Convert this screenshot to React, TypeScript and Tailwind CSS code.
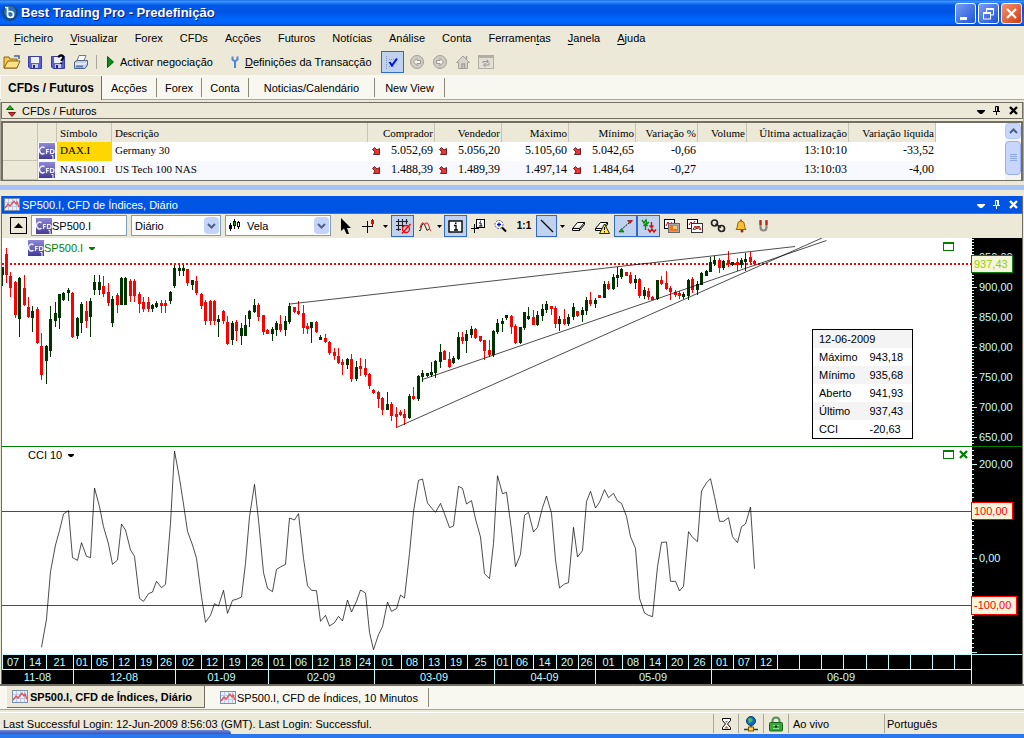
import React from 'react'
import clsx from 'clsx'

// x, high, body top, body bottom, low, rising
type Candle = [number, number, number, number, number, 0 | 1]

const candles: Candle[] = [
  [2, 267, 267, 275, 286, 1], [6, 248, 254, 275, 283, 0], [10, 272, 276, 288, 297, 0], [15, 281, 282, 315, 318, 0],
  [19, 277, 278, 319, 337, 1], [24, 275, 288, 305, 306, 0], [28, 297, 307, 317, 318, 0], [32, 306, 311, 318, 332, 1],
  [37, 307, 309, 343, 344, 0], [41, 333, 346, 375, 380, 0], [46, 345, 346, 361, 384, 1], [50, 306, 319, 351, 357, 1],
  [55, 302, 313, 321, 327, 1], [59, 294, 294, 318, 329, 1], [63, 292, 293, 300, 301, 1], [68, 288, 290, 293, 301, 1],
  [72, 292, 293, 337, 338, 0], [77, 317, 318, 336, 339, 1], [81, 302, 304, 323, 333, 1], [86, 301, 311, 321, 328, 0],
  [90, 298, 301, 317, 337, 1], [94, 275, 282, 290, 295, 1], [99, 275, 282, 290, 295, 1], [103, 276, 286, 294, 297, 0],
  [108, 283, 292, 303, 306, 0], [112, 296, 299, 323, 327, 1], [117, 293, 295, 305, 313, 0], [121, 277, 278, 305, 305, 1],
  [125, 277, 278, 305, 305, 1], [130, 279, 281, 296, 302, 0], [134, 279, 281, 296, 302, 0], [139, 292, 294, 304, 313, 0],
  [143, 297, 302, 309, 312, 0], [148, 297, 302, 309, 312, 0], [152, 304, 305, 309, 312, 1], [156, 301, 303, 307, 308, 1],
  [161, 300, 303, 306, 313, 0], [165, 300, 303, 306, 313, 0], [170, 291, 292, 301, 304, 1], [174, 265, 268, 286, 288, 1],
  [179, 265, 268, 271, 276, 1], [183, 265, 268, 271, 276, 1], [187, 269, 269, 283, 286, 0], [192, 280, 280, 285, 290, 1],
  [196, 276, 281, 293, 295, 0], [201, 293, 294, 306, 309, 0], [205, 300, 302, 321, 325, 0], [210, 300, 301, 321, 325, 0],
  [214, 300, 301, 321, 325, 0], [218, 315, 319, 322, 337, 1], [223, 310, 311, 321, 324, 0], [227, 316, 322, 344, 345, 0],
  [232, 321, 323, 340, 345, 1], [236, 320, 322, 331, 341, 0], [241, 323, 328, 336, 345, 1], [245, 315, 325, 336, 336, 1],
  [249, 310, 311, 319, 327, 1], [254, 299, 305, 312, 313, 1], [258, 303, 305, 317, 321, 0], [263, 315, 315, 332, 335, 0],
  [267, 329, 330, 334, 334, 0], [272, 327, 329, 334, 341, 1], [276, 321, 323, 330, 336, 1], [280, 315, 324, 330, 332, 0],
  [285, 316, 321, 330, 336, 1], [289, 303, 306, 322, 324, 1], [294, 307, 307, 312, 313, 0], [298, 301, 311, 314, 315, 0],
  [303, 305, 313, 328, 334, 0], [307, 323, 326, 329, 334, 0], [311, 322, 322, 328, 343, 1], [316, 321, 322, 332, 333, 0],
  [320, 335, 337, 340, 340, 1], [325, 334, 338, 342, 343, 0], [329, 341, 342, 353, 355, 0], [334, 348, 352, 356, 360, 0],
  [338, 348, 356, 363, 364, 0], [342, 359, 362, 365, 375, 0], [347, 358, 359, 365, 369, 1], [351, 354, 359, 379, 382, 0],
  [356, 361, 367, 379, 381, 1], [360, 358, 366, 369, 376, 0], [365, 359, 368, 375, 377, 0], [369, 373, 374, 386, 389, 0],
  [373, 389, 390, 393, 394, 0], [378, 391, 392, 399, 408, 0], [382, 397, 398, 410, 415, 0], [387, 392, 404, 410, 410, 1],
  [391, 402, 404, 416, 421, 0], [396, 407, 414, 417, 428, 0], [400, 410, 412, 415, 416, 0], [404, 409, 414, 418, 425, 0],
  [409, 394, 396, 418, 419, 1], [413, 387, 396, 399, 400, 0], [418, 375, 376, 399, 401, 1], [422, 370, 373, 377, 382, 1],
  [427, 373, 373, 376, 377, 1], [431, 362, 372, 375, 377, 1], [435, 360, 361, 373, 378, 1], [440, 344, 352, 362, 368, 1],
  [444, 350, 351, 360, 360, 0], [449, 352, 359, 367, 368, 0], [453, 356, 358, 363, 364, 1], [458, 332, 337, 359, 360, 1],
  [462, 332, 337, 341, 344, 0], [466, 330, 334, 341, 353, 1], [471, 326, 329, 335, 338, 1], [475, 328, 329, 338, 339, 0],
  [480, 336, 336, 341, 342, 0], [484, 340, 340, 351, 360, 0], [489, 340, 350, 355, 357, 0], [493, 330, 331, 355, 357, 1],
  [497, 319, 323, 332, 334, 1], [502, 318, 321, 324, 332, 1], [506, 315, 315, 318, 320, 1], [511, 315, 316, 327, 334, 0],
  [515, 324, 326, 343, 344, 0], [520, 327, 327, 343, 344, 1], [524, 312, 312, 328, 330, 1], [528, 307, 316, 319, 320, 1],
  [533, 310, 317, 325, 325, 0], [537, 311, 315, 325, 326, 1], [542, 304, 309, 316, 321, 1], [546, 301, 304, 310, 313, 1],
  [551, 306, 306, 309, 315, 0], [555, 306, 308, 324, 328, 0], [559, 316, 319, 324, 331, 1], [564, 309, 319, 324, 325, 0],
  [568, 314, 317, 324, 326, 1], [573, 303, 307, 317, 320, 1], [577, 311, 311, 316, 317, 0], [582, 307, 310, 315, 322, 1],
  [586, 297, 300, 311, 315, 1], [590, 292, 300, 304, 306, 0], [595, 298, 300, 304, 308, 1], [599, 295, 295, 298, 298, 0],
  [604, 281, 284, 298, 298, 1], [608, 281, 284, 289, 290, 0], [613, 274, 277, 289, 290, 1], [617, 267, 275, 278, 287, 1],
  [621, 268, 269, 277, 279, 1], [626, 272, 272, 276, 276, 0], [630, 272, 275, 283, 284, 0], [635, 275, 279, 283, 289, 1],
  [639, 278, 279, 296, 298, 0], [644, 287, 290, 296, 299, 1], [648, 288, 291, 297, 300, 0], [652, 296, 297, 300, 300, 0],
  [657, 280, 280, 299, 300, 1], [661, 276, 280, 284, 285, 0], [666, 271, 283, 289, 290, 0], [670, 286, 288, 292, 300, 0],
  [675, 290, 292, 295, 297, 0], [679, 291, 293, 296, 299, 0], [683, 292, 294, 297, 299, 1], [688, 279, 280, 296, 300, 1],
  [692, 277, 279, 290, 293, 0], [697, 281, 284, 290, 295, 1], [701, 272, 273, 285, 285, 1], [706, 270, 271, 276, 276, 1],
  [710, 257, 262, 272, 272, 1], [714, 256, 260, 264, 266, 1], [719, 258, 260, 268, 273, 0], [723, 260, 261, 268, 270, 1],
  [728, 251, 260, 264, 267, 0], [732, 262, 262, 265, 266, 1], [737, 258, 262, 265, 271, 0], [741, 258, 260, 265, 268, 1],
  [745, 253, 259, 262, 271, 1], [750, 252, 257, 262, 263, 0], [754, 260, 261, 264, 265, 0],
]

// CCI series, thirds of a unit below the top of the lower pane, one per candle from the tenth on
const cci = [
  622, 537, 395, 315, 272, 222, 212, 353, 361, 308, 349, 353, 144, 200, 260, 312, 373, 360, 252, 270, 330, 349, 475, 484,
  461, 456, 424, 443, 433, 250, 33, 115, 192, 274, 315, 355, 470, 547, 526, 491, 498, 451, 520, 481, 478, 471, 370, 230,
  133, 240, 398, 445, 455, 388, 381, 373, 234, 240, 221, 355, 437, 451, 452, 544, 526, 558, 548, 529, 543, 480, 516, 484,
  450, 459, 577, 629, 584, 560, 486, 514, 506, 465, 474, 340, 215, 121, 117, 189, 204, 217, 190, 221, 263, 258, 139, 145,
  192, 182, 237, 291, 401, 416, 310, 107, 161, 157, 270, 380, 343, 226, 217, 276, 262, 203, 168, 220, 360, 444, 432, 428,
  262, 351, 332, 185, 154, 204, 187, 149, 173, 160, 183, 190, 229, 290, 325, 475, 519, 526, 530, 380, 307, 306, 424, 424,
  453, 439, 275, 292, 305, 153, 128, 116, 170, 244, 244, 233, 290, 308, 260, 252, 201, 386,
]

const weekEdges = [
  2, 24, 46, 73, 91, 113, 135, 157, 175, 201, 223, 246, 268, 290, 312, 334, 356, 374, 401, 423, 445, 467, 494, 511, 533,
  556, 578, 595, 622, 644, 666, 688, 711, 733, 755, 777, 799, 821, 843, 866, 888, 910, 932, 954, 971,
]
const weekLabels = [
  '07', '14', '21', '01', '05', '12', '19', '26', '02', '12', '19', '26', '01', '06', '12', '18', '24', '01', '08', '13',
  '19', '25', '01', '06', '14', '20', '26', '01', '08', '14', '20', '26', '01', '07', '12',
]

const monthEdges = [2, 73, 175, 268, 374, 494, 595, 711, 971]
const monthLabels = ['11-08', '12-08', '01-09', '02-09', '03-09', '04-09', '05-09', '06-09']

const priceTicks: [string, number][] = [
  ['950,00', 257], ['900,00', 287], ['850,00', 317], ['800,00', 347], ['750,00', 377], ['700,00', 407], ['650,00', 437],
]

const menus = [
  ['', 'F', 'icheiro'], ['', 'V', 'isualizar'], ['Forex', '', ''], ['CFDs', '', ''], ['Acções', '', ''], ['Futuros', '', ''],
  ['Notícias', '', ''], ['Análise', '', ''], ['Conta', '', ''], ['Ferramen', 't', 'as'], ['', 'J', 'anela'], ['', 'A', 'juda'],
]

const quotes = [
  { symbol: 'DAX.I', name: 'Germany 30', bid: '5.052,69', ask: '5.056,20', high: '5.105,60', low: '5.042,65', pct: '-0,66', time: '13:10:10', net: '-33,52' },
  { symbol: 'NAS100.I', name: 'US Tech 100 NAS', bid: '1.488,39', ask: '1.489,39', high: '1.497,14', low: '1.484,64', pct: '-0,27', time: '13:10:03', net: '-4,00' },
]

const ohlc = [
  ['Máximo', '943,18'], ['Mínimo', '935,68'], ['Aberto', '941,93'], ['Último', '937,43'], ['CCI', '-20,63'],
]

type IconProps = { w?: number; h?: number; children: React.ReactNode }
const Icon = ({ w = 16, h = 16, children }: IconProps) => (
  <svg width={w} height={h} viewBox={`0 0 ${w} ${h}`} className="block shrink-0" aria-hidden="true">{children}</svg>
)

const CfdIcon = () => (
  <Icon>
    <defs>
      <linearGradient id="cfd" x1="0" y1="0" x2="0" y2="1">
        <stop offset="0" stopColor="#8f87d8" /><stop offset="1" stopColor="#453a94" />
      </linearGradient>
    </defs>
    <rect width="16" height="16" fill="url(#cfd)" />
    <path d="M5.500 4.800A3.100 3.300 0 1 0 5.500 10.200" fill="none" stroke="#f0eefc" strokeWidth="1.500" />
    <path d="M7.500 11V6.500H10M7.500 8.700H9.600" fill="none" stroke="#f0eefc" strokeWidth="1.200" />
    <path d="M11.500 6.500V10.500H13Q15 10.500 15 8.500T13 6.500Z" fill="none" stroke="#f0eefc" strokeWidth="1.200" />
    <path d="M12.500 12.500H14V16" fill="none" stroke="#fff" />
  </Icon>
)

const ChartIcon = () => (
  <Icon w={16} h={13}>
    <rect x=".5" y=".5" width="15" height="12" fill="#e9f0fb" stroke="#7d8fae" />
    <path d="M4.500 1V12M8.500 1V12M12.500 1V12M1 4.500H15M1 8.500H15" stroke="#b9c8e4" />
    <path d="M1 10L4 6L6 8L10 3L12 6L13 4L15 9" fill="none" stroke="#e05050" strokeWidth="1.300" />
  </Icon>
)

const DownIcon = () => (
  <Icon w={8} h={8}>
    <path d="M.5 2.500L2.500 .5L5 3L7.500 1.500V7.500H1.500L3 5Z" fill="#e83838" stroke="#500" strokeWidth=".8" />
  </Icon>
)

const Caret = ({ className = 'fill-black' }: { className?: string }) => (
  <svg width="6" height="3" viewBox="0 0 6 3" className={clsx('block shrink-0', className)} aria-hidden="true"><path d="M0 0H6V1L4 3H2L0 1Z" /></svg>
)

const PaneTools = ({ light }: { light?: boolean }) => {
  const color = light ? '#fff' : '#000'
  return (
    <div className="flex items-center gap-2 pr-1">
      <button aria-label="Opções"><Icon w={8} h={9}><path d="M0 4H8V5L5 8H3L0 5Z" fill={color} /></Icon></button>
      <button aria-label="Fixar"><Icon w={8} h={9}><path d="M2.500 5V.5H5.500V5M4.500 1V5M0 5.500H7M3.500 6V9" fill="none" stroke={color} /></Icon></button>
      <button aria-label="Fechar"><Icon w={9} h={9}><path d="M1 1L8 8M8 1L1 8" stroke={color} strokeWidth="2.400" /></Icon></button>
    </div>
  )
}

const Save = ({ query }: { query?: boolean }) => (
  <Icon>
    <path d="M1.500 2.500H14.500V14.500H3L1.500 13Z" fill="#5a5fd8" stroke="#3a3ca0" />
    <rect x="4" y="3" width="8" height="6" fill="#eef2fb" />
    <rect x="5" y="10" width="6" height="4" fill="#c9cede" /><rect x="6" y="11" width="2" height="3" fill="#26278a" />
    {query && <path d="M8.500 3.500Q9 1 11.500 1.200T13 4.500Q11.500 5.500 11.300 7M11.300 8.500V10" fill="none" stroke="#000" strokeWidth="2" />}
  </Icon>
)

type ToolProps = { label: string; on?: boolean; className?: string; children: React.ReactNode }
const Tool = ({ label, on, className = 'w-[23px]', children }: ToolProps) => (
  <button
    aria-label={label}
    className={clsx('flex h-[22px] shrink-0 items-center justify-center', on && 'border border-[#316ac5] bg-[#c1d2ee]', className)}
  >
    {children}
  </button>
)

const TitleBar = () => (
  <header className="flex h-[26px] items-center bg-[linear-gradient(#1c6ce8,#3a95ff_6%,#0058e6_20%,#0054e3_45%,#0066ff_75%,#0064fa_90%,#0040c8)] px-0.5">
    <Icon w={16} h={18}>
      <circle cx="8" cy="9" r="8" fill="#164a86" /><circle cx="8" cy="8" r="6" fill="#2d6fb0" />
      <path d="M3 3.500H5.500V10.500Q5.500 13.500 8.500 13.500T11.500 10.500T8.500 7.500H6" fill="none" stroke="#fff" strokeWidth="1.700" />
    </Icon>
    <h1 className="pl-[3px] text-[13px] font-bold text-white [text-shadow:1px_1px_#0a1883]">Best Trading Pro - Predefinição</h1>
    <div className="ml-auto flex gap-0.5">
      <button aria-label="Minimizar" className="size-[21px] rounded-[3px] border border-white bg-linear-to-br from-[#7a9cf0] to-[#1c50dc]">
        <Icon w={19} h={19}><rect x="4" y="13" width="7" height="3" fill="#fff" /></Icon>
      </button>
      <button aria-label="Restaurar" className="size-[21px] rounded-[3px] border border-white bg-linear-to-br from-[#7a9cf0] to-[#1c50dc]">
        <Icon w={19} h={19}>
          <path d="M7 5.500H14.500V11H12M7.500 4V8" fill="none" stroke="#fff" /><path d="M7 5H15" stroke="#fff" strokeWidth="2" />
          <rect x="4.500" y="9" width="7" height="6" fill="none" stroke="#fff" /><path d="M4 9H12" stroke="#fff" strokeWidth="2" />
        </Icon>
      </button>
      <button aria-label="Fechar" className="size-[21px] rounded-[3px] border border-white bg-linear-to-br from-[#f0906c] to-[#d03808]">
        <Icon w={19} h={19}><path d="M5 5L14 14M14 5L5 14" stroke="#fff" strokeWidth="2.300" /></Icon>
      </button>
    </div>
  </header>
)

const MainToolbar = () => (
  <div className="flex h-[25px] items-start pt-px">
    <Tool label="Abrir">
      <Icon w={18}><path d="M1 14V3H6L7 5H14V14Z" fill="#f5c84a" stroke="#8a6410" /><path d="M1 14L5 7H17L14 14Z" fill="#fbe38a" stroke="#8a6410" /><path d="M11 2H16V5" fill="none" stroke="#41658f" strokeWidth="1.500" /></Icon>
    </Tool>
    <Tool label="Gravar"><Save /></Tool>
    <Tool label="Gravar como"><Save query /></Tool>
    <Tool label="Imprimir">
      <Icon><path d="M4 7L6 1.500H13L11 7Z" fill="#fff" stroke="#6b7890" /><path d="M1.500 8L4 6.500H14.500V11L12 14.500H1.500Z" fill="#c3cede" stroke="#536585" /><path d="M2 10H12L14 8" fill="none" stroke="#fff" /><rect x="3" y="11.500" width="7" height="2" fill="#5d79b8" /></Icon>
    </Tool>
    <span className="ml-1 mr-2 mt-1 h-3.5 w-px bg-[#aca899]" />
    <button className="flex h-[22px] items-center gap-1.5 pl-0.5">
      <Icon w={7} h={12}><path d="M.5 .5L6.500 6L.5 11.500Z" fill="#0b8c1c" stroke="#045c0e" /></Icon>
      Activar negociação
    </button>
    <button className="ml-[18px] flex h-[22px] items-center gap-1.5">
      <Icon w={8} h={12}><path d="M1.500 .5V3.500L4 5.500L6.500 3.500V.5M4 5V12" fill="none" stroke="#4f86d8" strokeWidth="2" /></Icon>
      <span><u>D</u>efinições da Transacção</span>
    </button>
    <div className="ml-[9px] flex">
      <Tool label="Seleccionar" on>
        <Icon><path d="M2.500 2V15M5 5.500H12M5 12.500H10" stroke="#8296b8" strokeDasharray="1 1" /><path d="M5.500 8L8 11.500L13 4.500" fill="none" stroke="#0010e0" strokeWidth="2" /></Icon>
      </Tool>
      <Tool label="Anterior" className="ml-0.5 w-[23px]">
        <Icon><circle cx="8" cy="8" r="6.500" fill="#cfcdc3" stroke="#a3a197" /><path d="M11.500 6.500H8V4.500L4.500 8L8 11.500V9.500H11.500Z" fill="#f5f4ee" stroke="#9a988e" /></Icon>
      </Tool>
      <Tool label="Seguinte">
        <Icon><circle cx="8" cy="8" r="6.500" fill="#cfcdc3" stroke="#a3a197" /><path d="M4.500 6.500H8V4.500L11.500 8L8 11.500V9.500H4.500Z" fill="#f5f4ee" stroke="#9a988e" /></Icon>
      </Tool>
      <Tool label="Início">
        <Icon><path d="M1.500 8.500L8 2L14.500 8.500H12.500V14.500H3.500V8.500Z" fill="#d6d4ca" stroke="#a3a197" /><path d="M11.500 2V5M7 14V10H9.500V14" fill="none" stroke="#a3a197" strokeWidth="1.500" /></Icon>
      </Tool>
      <Tool label="Actualizar">
        <Icon><rect x=".5" y="1.500" width="15" height="13" fill="#e2e0d6" stroke="#b0aea3" /><path d="M1 3H15" stroke="#b0aea3" strokeWidth="2" /><path d="M5 9V7.500H10M8.500 5.500L10.500 7.500L8.500 9M11 8.500V11H6M7.500 9L5.500 11L7.500 13" fill="none" stroke="#98968c" /></Icon>
      </Tool>
    </div>
  </div>
)

const ViewTabs = () => {
  const tab = 'flex items-center justify-center'
  const sep = 'my-0.5 w-px bg-[#8a8878]'
  return (
    <nav className="flex h-[25px] border-b border-[#aca899] bg-[#f8f7f0] pl-px pt-px">
      <a href="#cfds" className="-mb-px flex w-[101px] items-center justify-center border-r border-[#716f64] bg-[#ece9d8] text-xs font-bold">CFDs / Futuros</a>
      <a href="#accoes" className={clsx(tab, 'w-[54px]')}>Acções</a><i className={sep} />
      <a href="#forex" className={clsx(tab, 'w-11')}>Forex</a><i className={sep} />
      <a href="#conta" className={clsx(tab, 'w-[46px]')}>Conta</a><i className={sep} />
      <a href="#noticias" className={clsx(tab, 'w-[125px]')}>Noticias/Calendário</a><i className={sep} />
      <a href="#view" className={clsx(tab, 'w-[69px]')}>New View</a><i className={sep} />
    </nav>
  )
}

const QuotePane = () => {
  const th = 'border-r border-[#c6c3b2] pl-[3px] pr-px font-normal'
  const text = 'pl-[3px] text-left text-[11px]'
  const priced = (value: string) => (
    <td className="pl-1 pr-0.5"><div className="flex items-center justify-between"><DownIcon />{value}</div></td>
  )
  return (
    <section className="border-x border-[#aca899]">
      <div className="flex h-[17px] items-center border border-[#716f64] pl-1">
        <Icon w={10} h={12}><path d="M.5 4.500L4 .5L7.500 4.500Z" fill="#16c016" stroke="#033d03" strokeWidth=".8" /><path d="M2.500 7.500H9.500L6 11.500Z" fill="#f02020" stroke="#5a0505" strokeWidth=".8" /></Icon>
        <h2 className="pl-1.5">CFDs / Futuros</h2>
        <div className="ml-auto"><PaneTools /></div>
      </div>
      <div className="mt-0.5 flex border-2 border-b border-[#716f64] bg-white">
        <table className="min-w-0 flex-1 table-fixed border-separate border-spacing-0 font-['Liberation_Serif',serif] text-xs leading-[17px]">
          <colgroup>
            <col className="w-[35px]" /><col className="w-[19px]" /><col className="w-[55px]" /><col className="w-[256px]" />
            <col className="w-[67px]" /><col className="w-[67px]" /><col className="w-[67px]" /><col className="w-[67px]" />
            <col className="w-[62px]" /><col className="w-[49px]" /><col className="w-[102px]" /><col className="w-[87px]" /><col />
          </colgroup>
          <thead>
            <tr className="h-[19px] text-right align-bottom text-[11px] [&>th:not(:last-child)]:bg-[#ece9d8]">
              <th className={th} aria-label="Selector" /><th className={th} aria-label="Tipo" />
              <th className={clsx(th, 'text-left')}>Símbolo</th><th className={clsx(th, 'text-left')}>Descrição</th>
              <th className={th}>Comprador</th><th className={th}>Vendedor</th><th className={th}>Máximo</th><th className={th}>Mínimo</th>
              <th className={th}>Variação %</th><th className={th}>Volume</th><th className={th}>Última actualização</th>
              <th className={th}>Variação líquida</th><th />
            </tr>
          </thead>
          <tbody>
            {quotes.map((q, i) => (
              <tr key={q.symbol} className={clsx('h-[19px] text-right align-top', i === 1 && 'bg-[#f8f8ff]')}>
                <td className="border-b border-r border-[#c6c3b2] bg-[#ece9d8]" />
                <td className="pl-px pt-px"><CfdIcon /></td>
                <td className={clsx(text, i === 0 && 'bg-[#ffd700]')}>{q.symbol}</td>
                <td className={text}>{q.name}</td>
                {priced(q.bid)}
                {priced(q.ask)}
                <td className="pr-0.5">{q.high}</td>
                {priced(q.low)}
                <td className="pr-0.5">{q.pct}</td>
                <td />
                <td className="pr-0.5">{q.time}</td>
                <td className="pr-0.5">{q.net}</td>
                <td className="bg-white" />
              </tr>
            ))}
          </tbody>
        </table>
        <div className="flex w-4 flex-col gap-0.5 bg-[#f4f3ee]">
          <button aria-label="Subir" className="flex h-4 items-center justify-center rounded-sm border border-[#b4c8f6] bg-[#c8d6fb]">
            <Icon w={9} h={6}><path d="M1 5L4.500 1.500L8 5" fill="none" stroke="#4d6185" strokeWidth="2" /></Icon>
          </button>
          <div className="flex h-[34px] items-center justify-center rounded-sm border border-[#98b0ea] bg-[#c8d6fb]">
            <Icon w={7} h={8}><path d="M0 .5H7M0 2.500H7M0 4.500H7M0 6.500H7" stroke="#8ea9e8" /></Icon>
          </div>
        </div>
      </div>
    </section>
  )
}

const field = 'h-[21px] border border-[#7f9db9] bg-white'
const Arrow = () => (
  <span className="pointer-events-none absolute inset-y-0.5 right-0.5 flex w-[15px] items-center justify-center rounded-sm bg-[#c3d3fa]">
    <Icon w={9} h={6}><path d="M1 1L4.500 4.500L8 1" fill="none" stroke="#4d6185" strokeWidth="2" /></Icon>
  </span>
)

const Eraser = () => <path d="M1.500 10.500L6.500 4.500H13.500V6.500L8.500 12.500H1.500ZM1.500 10.500H8.500L13.500 4.500M8.500 10.500V12.500" fill="#fff" stroke="#000" />

const ChartToolbar = () => (
  <div className="flex h-6 items-start pl-2 pt-px">
    <button aria-label="Recolher" className="mt-0.5 flex size-[17px] items-center justify-center border border-black">
      <Icon w={9} h={5}><path d="M0 5L4.500 0L9 5Z" /></Icon>
    </button>
    <div className={clsx(field, 'ml-1 flex w-24 items-center pl-1')}>
      <CfdIcon />
      <input aria-label="Símbolo" defaultValue="SP500.I" className="w-full min-w-0 outline-none" />
    </div>
    <div className="relative ml-1">
      <select aria-label="Período" className={clsx(field, 'w-[90px] appearance-none pl-[3px]')}><option>Diário</option></select>
      <Arrow />
    </div>
    <div className="relative ml-1">
      <select aria-label="Tipo de gráfico" className={clsx(field, 'w-[106px] appearance-none pl-[21px]')}><option>Vela</option></select>
      <span className="pointer-events-none absolute left-1 top-1">
        <Icon w={12} h={12}><path d="M1.500 4V12M5.500 0V10M9.500 2V10" stroke="#000" /><rect x="0" y="6" width="3" height="4" /><rect x="4.500" y="2.500" width="2" height="4" fill="#0a0" stroke="#000" /><rect x="8.500" y="3.500" width="2" height="4" fill="#fff" stroke="#000" /></Icon>
      </span>
      <Arrow />
    </div>
    <div className="ml-[3px] flex">
      <Tool label="Cursor"><Icon w={12} h={17}><path d="M1 0V13L4 10.500L6.500 16H9L7 10H11Z" /></Icon></Tool>
      <Tool label="Mira"><Icon><path d="M6.500 3V15M1 8.500H12" stroke="#000" /><path d="M11.500 1V8" stroke="#900" /><rect x="10" y="2" width="3" height="4" fill="#d81010" /></Icon></Tool>
      <Tool label="Opções da mira" className="w-[11px]"><Icon w={5} h={3}><path d="M0 0H5L2.500 3Z" /></Icon></Tool>
      <Tool label="Grelha" on>
        <Icon><path d="M3.500 1V13M7.500 1V9M11.500 1V6M1 3.500H13M1 7.500H9M1 11.500H6" stroke="#222" strokeWidth="1.100" /><circle cx="11" cy="11" r="3.500" fill="none" stroke="#f00" strokeWidth="1.300" /><path d="M7 15.500L15.500 6" stroke="#f00" strokeWidth="1.300" /></Icon>
      </Tool>
      <Tool label="Indicadores" className="w-[21px]">
        <Icon w={14} h={14}>
          <path d="M1 11.500H2.500L3.500 7L5 4.500H6L8 9L9 11.500L11 10" fill="none" stroke="#222" />
          <path d="M2 9L3 6L4.500 3.500L6.500 6L7.500 4H9.500L11 7L12 11L13 12" fill="none" stroke="#d02020" />
        </Icon>
      </Tool>
      <Tool label="Lista de indicadores" className="w-[9px]"><Icon w={5} h={3}><path d="M0 0H5L2.500 3Z" /></Icon></Tool>
      <Tool label="Informação" on>
        <Icon w={15} h={13}><rect x="1" y="1" width="13" height="11" fill="#fff" stroke="#000" strokeWidth="1.400" /><path d="M6 5.500H8V10M6 10H10" fill="none" stroke="#000" strokeWidth="1.300" /><rect x="7" y="2.500" width="1.500" height="1.500" /></Icon>
      </Tool>
      <Tool label="Etiqueta" className="w-[21px]">
        <Icon w={14}><path d="M3.500 6V15M0 10.500H8" stroke="#000" /><rect x="5.500" y="1.500" width="8" height="8" fill="#fff" stroke="#000" /><path d="M8 5H10V8M8 8H11.500M9 3.200H10" fill="none" stroke="#000" /></Icon>
      </Tool>
      <Tool label="Ampliar" className="w-[24px]">
        <Icon><circle cx="7" cy="6.500" r="4" fill="#fff" stroke="#555" strokeDasharray="2 1" /><path d="M7 4.500V8.500M5 6.500H9" stroke="#00f" strokeWidth="1.300" /><path d="M10 9.500L14 13.500" stroke="#000" strokeWidth="2" /></Icon>
      </Tool>
      <Tool label="Escala 1:1" className="w-[24px] text-[10px] font-bold">1:1</Tool>
      <Tool label="Linha" on className="w-[21px]"><Icon w={14} h={14}><path d="M1 1L13 13" stroke="#000" strokeWidth="1.300" /></Icon></Tool>
      <Tool label="Mais linhas" className="w-[10px]"><Icon w={5} h={3}><path d="M0 0H5L2.500 3Z" /></Icon></Tool>
      <Tool label="Borracha" className="w-[22px]"><Icon w={15}><Eraser /></Icon></Tool>
      <Tool label="Apagar tudo" className="w-[25px]">
        <Icon><Eraser /><path d="M10.500 6L15.500 15.500H5.500Z" fill="#fff04a" stroke="#222" /><path d="M10.500 9V12M10.500 13V14.500" stroke="#000" /></Icon>
      </Tool>
      <Tool label="Tendência" on>
        <Icon><path d="M3 12L12 4" stroke="#000" strokeDasharray="2 1" /><path d="M1 14H6L3.500 10.500Z" fill="#0a0" stroke="#050" strokeWidth=".6" /><path d="M9.500 2.500H14.500L12 5.500Z" fill="#f00" stroke="#700" strokeWidth=".6" /></Icon>
      </Tool>
      <Tool label="Ordens" on>
        <Icon>
          <path d="M1 2L3 5L5 2L6 6L8 4M4.500 6V12M2.500 8L4.500 6L6.500 8" fill="none" stroke="#0a8a0a" strokeWidth="1.400" />
          <path d="M10.500 4V9M8.500 7.500L10.500 9.500L12.500 7.500M7 11L9 14L11 11L13 14L15 11.500" fill="none" stroke="#c81414" strokeWidth="1.400" />
        </Icon>
      </Tool>
      <Tool label="Copiar gráfico">
        <Icon><rect x=".5" y="1.500" width="10" height="9" fill="#fff" stroke="#000" /><path d="M2 8L4 4L6 7L8 4" fill="none" stroke="#c00" /><rect x="4.500" y="5.500" width="11" height="9" fill="#a8a8b4" stroke="#666" /><rect x="6" y="7" width="8" height="6" fill="#e87828" /><rect x="9" y="8" width="4" height="3" fill="#ffc870" /></Icon>
      </Tool>
      <Tool label="Duplicar gráfico">
        <Icon><rect x=".5" y="1.500" width="10" height="9" fill="#fff" stroke="#000" /><path d="M2 7L4 4L6 6L8 3" fill="none" stroke="#c00" /><rect x="4.500" y="5.500" width="11" height="9" fill="#fff" stroke="#333" /><path d="M6 12L8 8L10 11L12 8L14 12" fill="none" stroke="#c00" /><path d="M6 10L8 12L10 8L13 12" fill="none" stroke="#222" strokeWidth=".7" /></Icon>
      </Tool>
      <Tool label="Ligar">
        <Icon><circle cx="4.500" cy="5" r="3" fill="none" stroke="#222" strokeWidth="1.700" /><circle cx="11.500" cy="10.500" r="3" fill="none" stroke="#222" strokeWidth="1.700" /><path d="M5.500 6L11 9.500" stroke="#222" strokeWidth="1.500" /></Icon>
      </Tool>
      <Tool label="Alerta">
        <Icon w={12}><path d="M1 11.500Q2.500 10 2.500 7Q2.500 3 6 3T9.500 7Q9.500 10 11 11.500Z" fill="#f8c030" stroke="#9a6408" /><path d="M6 1.500V3" stroke="#9a6408" strokeWidth="2" /><circle cx="7" cy="13" r="1.500" fill="#8a3010" /></Icon>
      </Tool>
      <Tool label="Íman">
        <Icon w={11}><path d="M2.500 3V9Q2.500 12.500 5.500 12.500T8.500 9V3" fill="none" stroke="#8a8a84" strokeWidth="2.200" /><path d="M2.500 2V7M8.500 2V7" stroke="#b03020" strokeWidth="2.200" /></Icon>
      </Tool>
    </div>
  </div>
)

const centre = (edges: number[], i: number) => (edges[i] + edges[i + 1]) / 2

const PriceChart = () => (
  <svg viewBox="2 238 1020 446" className="block w-full bg-white text-[11px]" role="img" aria-label="SP500.I Diário">
    <path d="M2 264H972" stroke="#f00" strokeWidth="2" strokeDasharray="2 2" />
    <g shapeRendering="crispEdges">
      {candles.map(([x, high, top, bottom, low, up]) => (
        <g key={x} fill={up ? '#003300' : '#ff0000'}>
          <rect x={x} y={high} width="1" height={low - high} />
          <rect x={x - 1} y={top} width="3" height={bottom - top} />
        </g>
      ))}
    </g>
    <path d="M290 304L795 246.500M422.500 379.500L826.500 240.500M396.500 427.500L822 238" fill="none" stroke="#000" strokeWidth=".7" />

    <g shapeRendering="crispEdges">
      <rect x="2" y="446" width="1020" height="1" fill="#008000" />
      <rect x="2" y="511" width="970" height="1" fill="#f00" />
      <rect x="2" y="605" width="970" height="1" fill="#008000" />
    </g>
    <polyline points={cci.map((v, i) => `${candles[i + 9][0] + 0.5},${440 + v / 3}`).join(' ')} fill="none" stroke="#000" strokeWidth=".7" />

    {/* value scale */}
    <rect x="972" y="238" width="50" height="446" />
    <g shapeRendering="crispEdges" stroke="#c0ffff" strokeWidth="2">
      <path d="M973 239V446" strokeDasharray="1 2" />
      <path d="M973 450V654" strokeDasharray="1 3.700" />
    </g>
    <g fill="#c0ffff">
      {priceTicks.map(([label, y]) => (
        <g key={label}>
          <rect x="972" y={y} width="5" height="1" />
          <text x="979" y={y + 4}>{label}</text>
        </g>
      ))}
      <rect x="972" y="464" width="5" height="1" /><text x="979" y="468">200,00</text>
      <rect x="972" y="558" width="5" height="1" /><text x="979" y="562">0,00</text>
      <rect x="972" y="652" width="5" height="1" />
    </g>
    <rect x="972" y="446" width="50" height="1" fill="#008000" />
    <rect x="971.500" y="255.500" width="41" height="17" fill="#f5f5dc" stroke="#008000" />
    <text x="974" y="268" fill="#9acd00">937,43</text>
    <rect x="971.500" y="502.500" width="41" height="17" fill="#f5f5dc" stroke="#f00" />
    <text x="974" y="515" fill="#f00">100,00</text>
    <rect x="971.500" y="596.500" width="45" height="18" fill="#f5f5dc" stroke="#f00" />
    <text x="974" y="609" fill="#f00">-100,00</text>

    {/* date scale */}
    <rect x="2" y="654" width="1020" height="30" />
    <g fill="#c0ffff" textAnchor="middle">
      <rect x="2" y="654" width="1020" height="1" />
      <rect x="2" y="669" width="970" height="1" />
      {weekEdges.map((x) => <rect key={x} x={x} y="654" width="1" height="15" />)}
      {monthEdges.slice(1).map((x) => <rect key={x} x={x} y="654" width="1" height="30" />)}
      {weekLabels.map((label, i) => <text key={i} x={centre(weekEdges, i)} y="666">{label}</text>)}
      {monthLabels.map((label, i) => <text key={label} x={centre(monthEdges, i)} y="681">{label}</text>)}
    </g>
  </svg>
)

const MaxButton = () => (
  <button aria-label="Maximizar painel"><Icon w={11} h={9}><path d="M0 1H11" stroke="#008000" strokeWidth="2" /><rect x=".5" y=".5" width="10" height="8" fill="none" stroke="#008000" /></Icon></button>
)

const ChartPane = () => (
  <section className="mx-px border-x border-[#716f64]">
    <div className="flex h-[18px] items-center border-b border-[#716f64] bg-[#0054e3] pl-0.5 text-white">
      <ChartIcon />
      <h2 className="pl-0.5">SP500.I, CFD de Índices, Diário</h2>
      <div className="ml-auto"><PaneTools light /></div>
    </div>
    <ChartToolbar />
    <div className="relative">
      <PriceChart />
      <button className="absolute left-[26px] top-0.5 flex items-center text-[#008000]">
        <CfdIcon />SP500.I<span className="pl-1.5"><Caret className="fill-[#008000]" /></span>
      </button>
      <div className="absolute right-[68px] top-1 flex"><MaxButton /></div>
      <button className="absolute left-[26px] top-[210px] flex items-center">
        CCI 10<span className="pl-1.5"><Caret /></span>
      </button>
      <div className="absolute right-[54px] top-[212px] flex items-center gap-[5px]">
        <MaxButton />
        <button aria-label="Fechar painel"><Icon w={9} h={9}><path d="M1 1L8 8M8 1L1 8" stroke="#008000" strokeWidth="2.400" /></Icon></button>
      </div>
      <table className="absolute right-[109px] top-[91px] w-[101px] border border-black bg-white text-left leading-[18px]">
        <thead><tr className="bg-[#f4f4f4]"><th colSpan={2} className="pl-1.5 font-normal">12-06-2009</th></tr></thead>
        <tbody>
          {ohlc.map(([label, value], i) => (
            <tr key={label} className={clsx(i % 2 === 1 && 'bg-[#f4f4f4]')}>
              <th className="w-[57px] pl-1.5 font-normal">{label}</th><td>{value}</td>
            </tr>
          ))}
        </tbody>
      </table>
    </div>
  </section>
)

const StatusBar = () => {
  const cell = 'flex items-center border-l border-[#aca899]'
  return (
    <footer className="relative flex h-[22px] border-t border-white py-px">
      <p className="flex items-center pl-[3px]">Last Successful Login: 12-Jun-2009 8:56:03 (GMT). Last Login: Successful.</p>
      <div className="ml-auto flex">
        <div className={clsx(cell, 'w-[25px] justify-center')}>
          <Icon w={9} h={12}><path d="M.5 .5H8.500V2.500L5.500 6L8.500 9.500V11.500H.5V9.500L3.500 6L.5 2.500Z" fill="#fff" stroke="#000" /><path d="M2 10.500H7L4.500 8ZM3 3H6L4.500 5Z" fill="#a07840" /></Icon>
        </div>
        <div className={clsx(cell, 'w-[25px] justify-center')}>
          <Icon w={14}><circle cx="7" cy="5" r="4.500" fill="#1668c8" stroke="#0a3870" /><path d="M4 3Q6 1 8 3T5 7Z" fill="#42c848" /><path d="M7 9.500V12M0 13.500H14" stroke="#3a3a3a" strokeWidth="1.500" /><rect x="4.500" y="11" width="5" height="4" fill="#ffd24a" stroke="#7a5a00" /></Icon>
        </div>
        <div className={clsx(cell, 'w-[25px] justify-center')}>
          <Icon w={14}><path d="M3.500 8V5Q3.500 1.500 7 1.500T10.500 5V8" fill="none" stroke="#5b8a5b" strokeWidth="2" /><rect x=".5" y="6.500" width="13" height="8.500" rx="1" fill="#3aa63a" stroke="#14641a" /><path d="M4 9.500H10M4 12.500H10" stroke="#8fdc8f" /><circle cx="7" cy="10.500" r="1.300" fill="#033a08" /></Icon>
        </div>
        <div className={clsx(cell, 'w-24 pl-1')}>Ao vivo</div>
        <div className={clsx(cell, 'w-[140px] pl-0.5')}>Português</div>
      </div>
      <span className="absolute bottom-0 left-0 h-1 w-[231px] rounded-tr-sm bg-linear-to-b from-[#6f8be0] to-[#3f50b4]" />
    </footer>
  )
}

export default function App() {
  return (
    <div className="bg-[#ece9d8] font-['Liberation_Sans',sans-serif] text-[11px] leading-[14px] text-black">
      <TitleBar />
      <nav className="flex h-6 items-center gap-[17px] pl-3.5" aria-label="Menu">
        {menus.map(([before, key, after]) => (
          <button key={before + key + after}>{before}<u className="underline-offset-2">{key}</u>{after}</button>
        ))}
      </nav>
      <MainToolbar />
      <ViewTabs />
      <main className="pt-0.5">
        <QuotePane />
        <div className="mb-1.5 mt-1 h-[5px] bg-[#a6c2f6]" />
        <ChartPane />
      </main>
      <nav className="border-t-2 border-[#716f64]" aria-label="Gráficos">
        <div className="flex h-6 border-b border-[#aca899] bg-[#f8f7f0] pl-[7px]">
          <a href="#diario" className="mb-px flex w-[198px] items-center gap-0.5 whitespace-nowrap border-b border-r border-[#716f64] bg-[#ece9d8] pl-[5px] font-bold"><ChartIcon />SP500.I, CFD de Índices, Diário</a>
          <a href="#minutos" className="flex w-[223px] items-center gap-px whitespace-nowrap pl-[15px]"><ChartIcon />SP500.I, CFD de Índices, 10 Minutos</a>
          <i className="my-0.5 w-px bg-[#8a8878]" />
        </div>
      </nav>
      <div className="h-0.5" />
      <StatusBar />
      <div className="h-1 bg-[#2a76ec]" />
    </div>
  )
}
